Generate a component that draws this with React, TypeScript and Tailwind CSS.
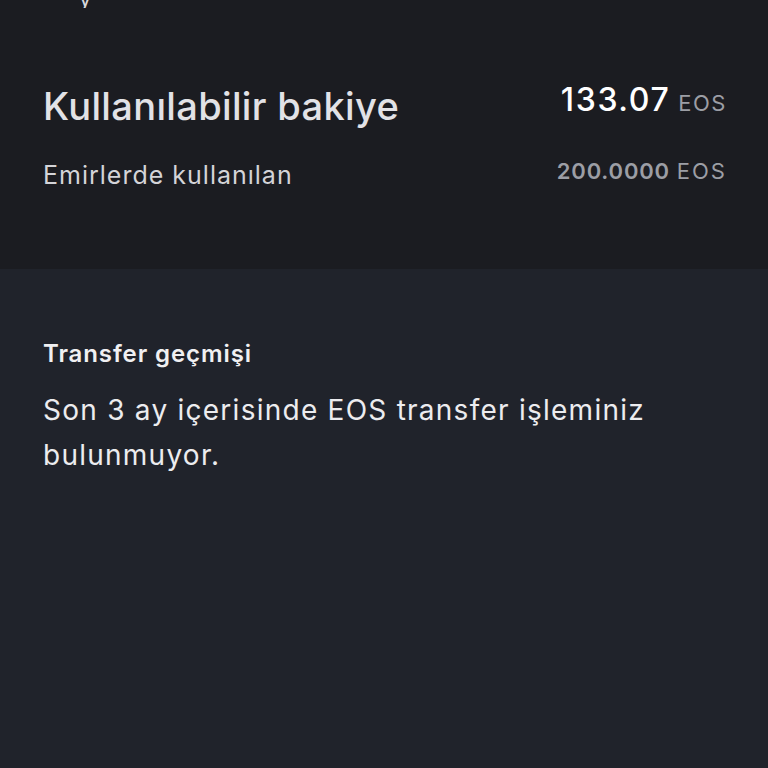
export default function App() {
  const font = { fontFamily: "Inter, 'Noto Sans', sans-serif" };
  return (
    <div className="w-[768px] h-[768px] flex flex-col bg-[#20232b] overflow-hidden" style={font}>
      <div className="h-[269px] shrink-0 bg-[#1b1c21] px-[43px] flex flex-col">
        <div className="h-[8px] relative overflow-hidden">
          <span className="absolute left-[36px] bottom-[-1px] text-[#d8d8dc] text-[22px] leading-none">y</span>
        </div>
        <div className="flex items-start justify-between mt-[76px]">
          <span className="mt-[3px] text-[#e2e2e6] text-[38px] leading-none font-medium tracking-[0.35px]">
            Kullanılabilir bakiye
          </span>
          <span className="flex items-baseline gap-[8px] leading-none mr-[-2px]">
            <span className="text-white text-[32px] leading-none font-medium tracking-[1.6px]">133.07</span>
            <span className="text-[#9c9ea5] text-[22px] leading-none tracking-[1.5px]">EOS</span>
          </span>
        </div>
        <div className="flex items-start justify-between mt-[35px]">
          <span className="mt-[3px] text-[#d4d4d8] text-[25px] leading-none tracking-[1px]">
            Emirlerde kullanılan
          </span>
          <span className="flex items-baseline gap-[7px] text-[#9c9ea5] text-[22px] leading-none mr-[-2px]">
            <span className="font-semibold tracking-[0.8px]">200.0000</span>
            <span className="tracking-[2px]">EOS</span>
          </span>
        </div>
      </div>
      <div className="px-[43px] pt-[73px]">
        <div className="text-[#f0f0f2] text-[24px] leading-none font-semibold tracking-[0.9px]">Transfer geçmişi</div>
        <div className="text-[#ececef] text-[28px] leading-[45px] mt-[22px] w-[660px] tracking-[1.25px]">
          Son 3 ay içerisinde EOS transfer işleminiz bulunmuyor.
        </div>
      </div>
    </div>
  );
}
